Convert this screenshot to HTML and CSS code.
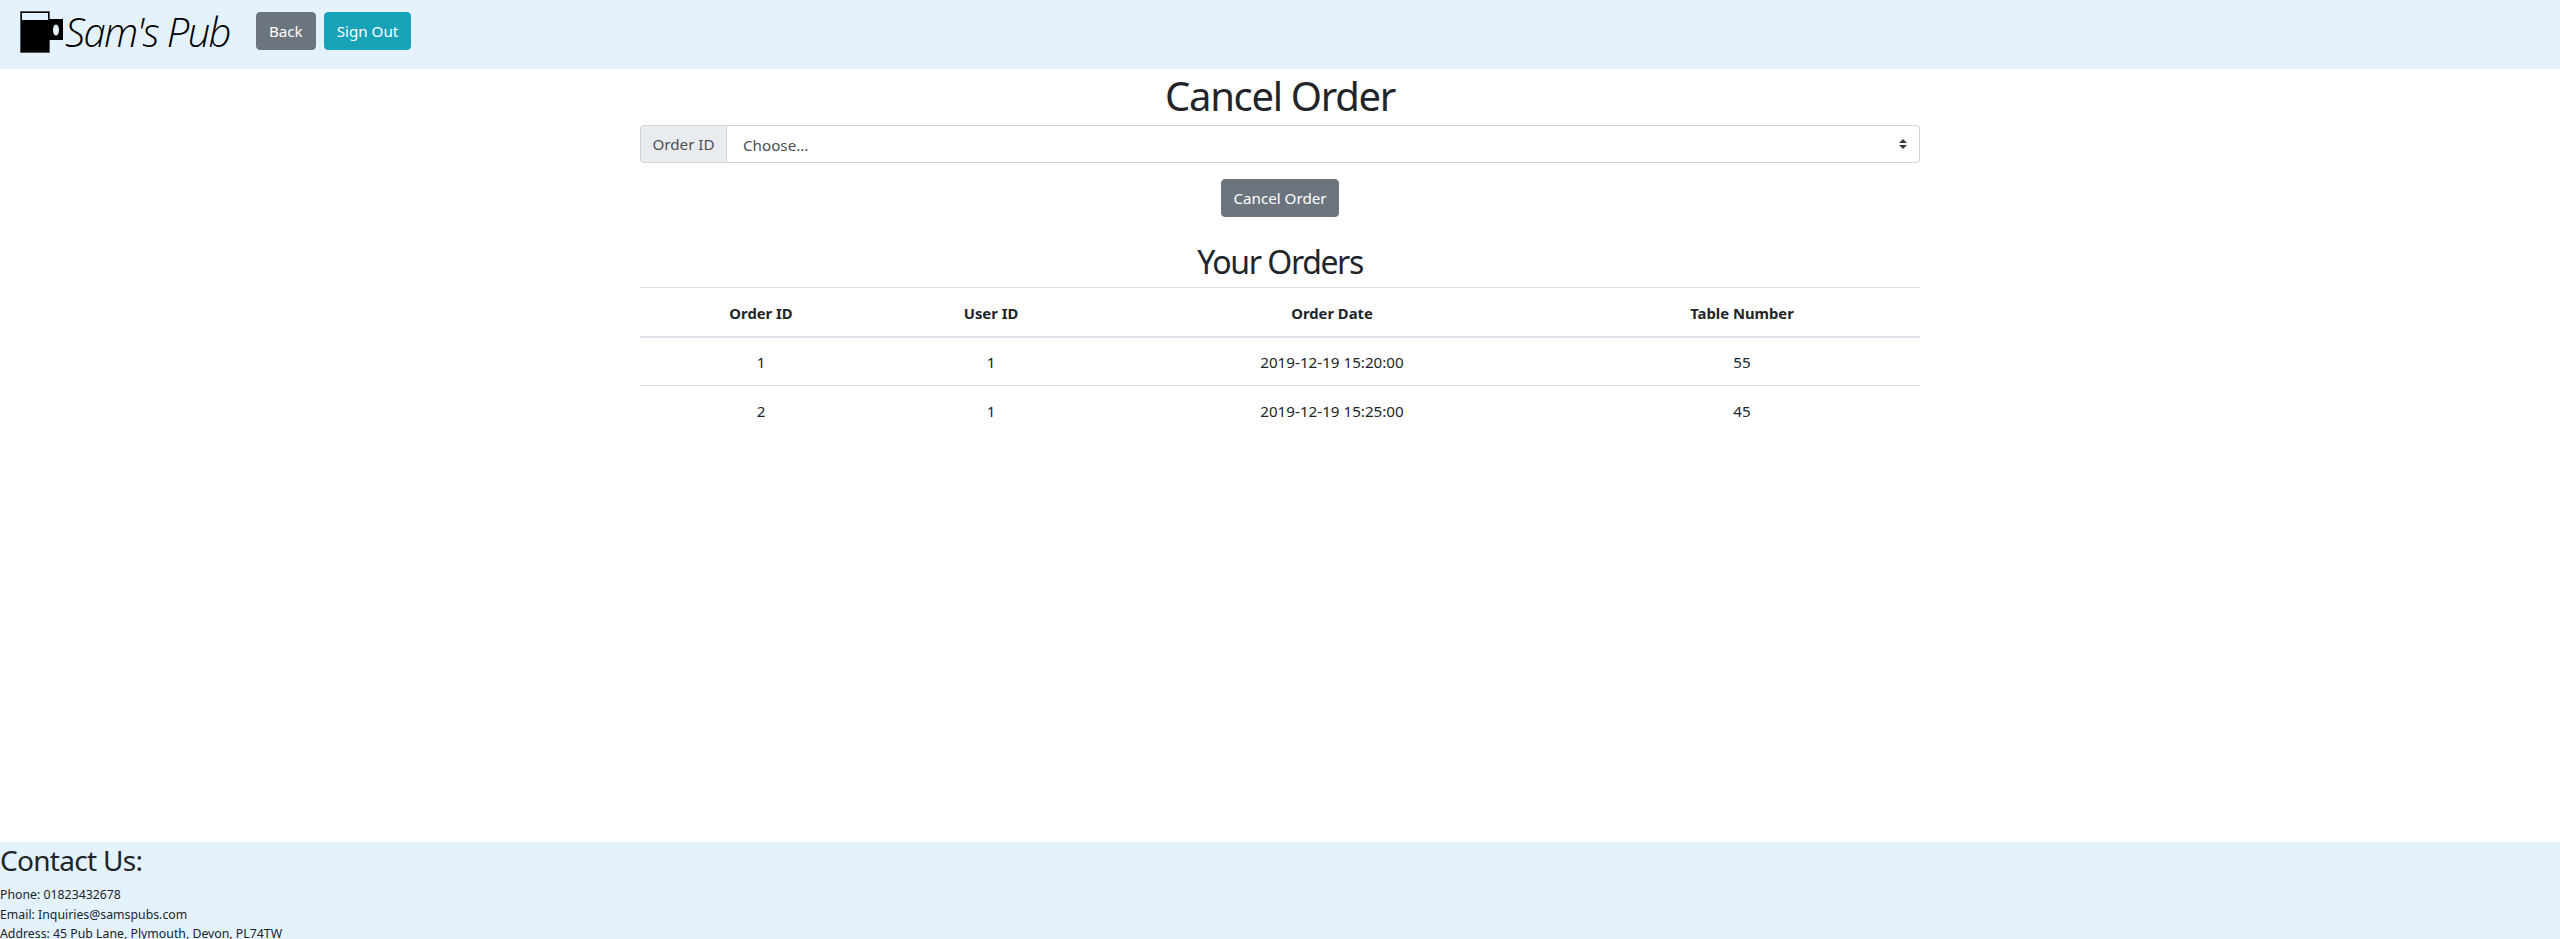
FILE: index.html
```html
<!DOCTYPE html>
<html lang="en">
<head>
<meta charset="utf-8">
<title>Sam's Pub</title>
<link rel="stylesheet" href="styles.css">
</head>
<body>
<nav class="navbar">
  <a class="brand" href="#">
    <svg class="mug" width="44" height="44" viewBox="0 0 44 44">
      <path d="M0.5 1.5H29.5V42.5H0.5Z" fill="#000" stroke="#555" stroke-width="1"/>
      <path d="M2 3H28V10H2Z" fill="#e3f2fd"/>
      <path d="M29 9H43V30H29Z" fill="#000"/>
      <ellipse cx="36" cy="20" rx="3" ry="5.5" fill="#e3f2fd"/>
    </svg>
    <span class="brand-name">Sam's Pub</span>
  </a>
  <a class="btn btn-grey" href="#">Back</a>
  <a class="btn btn-teal" href="#">Sign Out</a>
</nav>
<main class="content">
  <h1 class="title">Cancel Order</h1>
  <div class="input-group">
    <label class="input-label" for="order">Order ID</label>
    <select class="select" id="order"><option>Choose...</option><option>1</option><option>2</option></select>
  </div>
  <div class="actions"><button class="btn btn-grey btn-narrow" type="button">Cancel Order</button></div>
  <h2 class="subtitle">Your Orders</h2>
  <table class="table">
    <colgroup><col class="c1"><col class="c2"><col class="c3"><col class="c4"></colgroup>
    <thead>
      <tr><th>Order ID</th><th>User ID</th><th>Order Date</th><th>Table Number</th></tr>
    </thead>
    <tbody>
      <tr><td>1</td><td>1</td><td>2019-12-19 15:20:00</td><td>55</td></tr>
      <tr><td>2</td><td>1</td><td>2019-12-19 15:25:00</td><td>45</td></tr>
    </tbody>
  </table>
</main>
<footer class="footer">
  <h4 class="footer-title">Contact Us:</h4>
  <p class="footer-line">Phone: 01823432678</p>
  <p class="footer-line">Email: Inquiries@samspubs.com</p>
  <p class="footer-line">Address: 45 Pub Lane, Plymouth, Devon, PL74TW</p>
</footer>
</body>
</html>
```
FILE: styles.css
```css
* { box-sizing: border-box; }
html, body { margin: 0; padding: 0; }
body {
  font-family: "Noto Sans", "Open Sans", sans-serif;
  font-size: 16px;
  line-height: 1.5;
  color: #212529;
  background: #fff;
}
.navbar {
  height: 69px;
  background: #e3f2fd;
  display: flex;
  align-items: flex-start;
  padding: 10px 20px 0;
}
.brand {
  display: flex;
  align-items: center;
  color: #000;
  text-decoration: none;
  margin-right: 26px;
}
.mug { flex: none; }
.brand-name {
  font-family: "Open Sans", sans-serif;
  font-weight: 300;
  font-style: italic;
  font-size: 40px;
  line-height: 44px;
  letter-spacing: -1.6px;
  margin-left: 1px;
  white-space: nowrap;
}
.btn {
  display: inline-block;
  height: 38px;
  padding: 0 12px;
  border: 1px solid transparent;
  border-radius: 4px;
  color: #fff;
  font: inherit;
  font-size: 15.2px;
  line-height: 36px;
  text-decoration: none;
  white-space: nowrap;
}
.navbar .btn { margin-top: 2px; }
.btn-grey { background: #6c757d; border-color: #6c757d; }
.btn-teal { background: #17a2b8; border-color: #17a2b8; margin-left: 8px; }
.btn-narrow { padding: 0 11px; }
.content {
  width: 1280px;
  height: 773px;
  margin: 0 auto;
}
.title {
  margin: 0;
  height: 56px;
  font-weight: 400;
  font-size: 40px;
  line-height: 54px;
  letter-spacing: -1.3px;
  text-align: center;
}
.input-group {
  display: flex;
  height: 38px;
}
.input-label {
  width: 87px;
  flex: none;
  background: #e9ecef;
  border: 1px solid #ced4da;
  border-radius: 4px 0 0 4px;
  color: #495057;
  font-size: 15.2px;
  line-height: 36px;
  text-align: center;
}
.select {
  flex: 1;
  height: 38px;
  margin-left: -1px;
  padding: 2px 12px 0 16px;
  appearance: none;
  border: 1px solid #ced4da;
  border-radius: 0 4px 4px 0;
  color: #495057;
  font: inherit;
  font-size: 15.2px;
  background: #fff url("data:image/svg+xml,%3csvg xmlns='http://www.w3.org/2000/svg' viewBox='0 0 4 5'%3e%3cpath fill='%23343a40' d='M2 0L0 2h4zm0 5L0 3h4z'/%3e%3c/svg%3e") no-repeat right 12px center / 8px 10px;
}
.actions {
  display: flex;
  justify-content: center;
  margin-top: 16px;
}
.subtitle {
  margin: 0;
  height: 70px;
  padding-top: 22px;
  font-weight: 400;
  font-size: 32px;
  line-height: 46px;
  letter-spacing: -1.4px;
  text-align: center;
}
.table {
  width: 1280px;
  table-layout: fixed;
  border-collapse: collapse;
  font-size: 15.2px;
  text-align: center;
}
.c1 { width: 242px; }
.c2 { width: 218px; }
.c3 { width: 464px; }
.c4 { width: 356px; }
.table th, .table td {
  height: 49px;
  padding: 2px 12px 0;
  vertical-align: middle;
  border-top: 1px solid #dee2e6;
}
.table td { padding-top: 3px; }
.table th {
  font-weight: 700;
  font-size: 14.8px;
  border-bottom: 2px solid #dee2e6;
}
.footer {
  background: #e3f2fd;
  height: 140px;
}
.footer-title {
  margin: 0;
  font-weight: 400;
  font-size: 28px;
  line-height: 36px;
  letter-spacing: -0.7px;
}
.footer-line {
  margin: 0;
  font-size: 12.3px;
  line-height: 19.5px;
}
.footer-title + .footer-line { margin-top: 7px; }
```
